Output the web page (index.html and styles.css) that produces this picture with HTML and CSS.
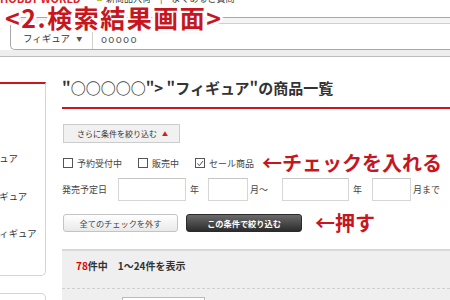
FILE: index.html
```html
<!DOCTYPE html>
<html lang="ja">
<head>
  <meta charset="UTF-8" />
  <title>検索結果画面</title>
  <link rel="stylesheet" href="styles.css">
</head>
<body>
  <div class="topstrip">
    <div class="topstrip-inner">
      <span class="logo">HOBBY WORLD</span>
      <span class="topnav"><i class="dot"></i>新商品入荷　|　よくあるご質問</span>
    </div>
  </div>

  <header>
    <div class="search">
      <div class="search-cat">フィギュア <span class="tri-down">▼</span></div>
      <div class="search-word">ooooo</div>
    </div>
  </header>

  <div class="note-title">&lt;2.検索結果画面&gt;</div>

  <div class="layout">
    <aside>
      <div class="side-box">
        <ul class="side-list">
          <li>ミニアチュア</li>
          <li>可動フィギュア</li>
          <li>美少女フィギュア</li>
        </ul>
      </div>
      <div class="side-box side-box2"></div>
    </aside>

    <main>
      <h2>"○○○○○"&gt; "フィギュア"の商品一覧</h2>

      <div class="more-btn">さらに条件を絞り込む <span class="tri-up">▲</span></div>

      <div class="checks">
        <span class="cb"></span><span class="cb-label">予約受付中</span>
        <span class="cb"></span><span class="cb-label">販売中</span>
        <span class="cb checked">
          <svg width="9" height="9" viewBox="0 0 9 9"><path d="M1.5 4.5 L3.8 6.8 L7.8 1.8" fill="none" stroke="#444" stroke-width="1.1"/></svg>
        </span><span class="cb-label cb-last">セール商品</span>
        <span class="note">←チェックを入れる</span>
      </div>

      <div class="dates">
        <span class="date-label">発売予定日</span>
        <span class="field f-year"></span>
        <span class="unit u1">年</span>
        <span class="field f-month"></span>
        <span class="unit u2">月～</span>
        <span class="field f-year2"></span>
        <span class="unit u3">年</span>
        <span class="field f-month2"></span>
        <span class="unit u4">月まで</span>
      </div>

      <div class="actions">
        <div class="btn btn-light">全てのチェックを外す</div>
        <div class="btn btn-dark">この条件で絞り込む</div>
        <span class="note note-push">←押す</span>
      </div>

      <div class="results">
        <div class="count"><span class="num">78</span>件中　1～24件を表示</div>
        <div class="sort">
          <span class="sort-label">並び替え</span>
          <span class="sort-select"></span>
        </div>
      </div>
    </main>
  </div>
</body>
</html>
```

FILE: styles.css
```css
:root {
  --note-red: #c8161e;
  --line-red: #c9171e;
  --text-color: #333333;
}

* {
  margin: 0;
  padding: 0;
  box-sizing: border-box;
}

body {
  font-family: "Noto Sans CJK JP", "Noto Sans", sans-serif;
  color: var(--text-color);
  background: #ffffff;
  width: 450px;
  height: 300px;
  overflow: hidden;
  position: relative;
}

/* top strip, mostly cut off */
.topstrip {
  height: 5px;
  overflow: hidden;
}

.topstrip-inner {
  margin-top: -7px;
  height: 11px;
  display: flex;
  align-items: center;
  font-size: 9px;
  line-height: 11px;
  white-space: nowrap;
}

.logo {
  color: #d22;
  font-weight: bold;
  font-size: 11px;
  width: 97px;
}

.topnav {
  color: #444;
  display: flex;
  align-items: center;
}

.dot {
  display: inline-block;
  width: 5px;
  height: 5px;
  background: #b6c92b;
  margin-right: 4px;
}

/* header with search */
header {
  padding-top: 12px;
  height: 52px;
  border-bottom: 1px solid #bdbdbd;
  background: linear-gradient(#fff 45px, #eeeeee 45px);
}

.search {
  margin-left: 10px;
  height: 33px;
  display: flex;
  border: 1px solid #a8a8a8;
  border-right: none;
  border-bottom-left-radius: 5px;
  background: #fff;
  box-shadow: inset 0 5px 0 #f4f4f4, inset 0 6px 0 #cfcfcf;
  font-size: 9.5px;
}

.search-cat {
  width: 82px;
  padding-left: 12px;
  border-right: 1px solid #d0d0d0;
  display: flex;
  align-items: center;
  padding-top: 9px;
  color: #333;
}

.tri-down {
  font-size: 6px;
  color: #555;
  margin-left: 6px;
}

.search-word {
  padding-left: 8px;
  padding-top: 9px;
  display: flex;
  align-items: center;
  font-size: 10px;
  letter-spacing: 1.3px;
  color: #555;
}

/* annotation over the header */
.note-title {
  position: absolute;
  left: 5px;
  top: 5px;
  font-size: 25px;
  line-height: 25px;
  letter-spacing: 1.5px;
  font-weight: bold;
  color: var(--note-red);
  white-space: nowrap;
  text-shadow:
    2px 0 0 #fff, -2px 0 0 #fff, 0 2px 0 #fff, 0 -2px 0 #fff,
    2px 2px 0 #fff, -2px 2px 0 #fff, 2px -2px 0 #fff, -2px -2px 0 #fff,
    3px 0 1px #fff, -3px 0 1px #fff, 0 3px 1px #fff, 0 -3px 1px #fff,
    0 0 5px rgba(0, 0, 0, 0.25);
}

.note {
  color: var(--note-red);
  font-weight: bold;
  font-size: 20px;
  line-height: 20px;
  white-space: nowrap;
}

/* layout */
.layout {
  display: flex;
  align-items: flex-start;
}

aside {
  width: 84px;
  margin-left: -38px;
  flex-shrink: 0;
  padding-top: 25px;
}

.side-box {
  border: 1px solid #d4d4d4;
  border-top: 2px solid var(--line-red);
  border-left: none;
  border-radius: 0 0 5px 0;
  height: 194px;
  padding-top: 56px;
}

.side-box2 {
  margin-top: 17px;
  border-top: 1px solid #d4d4d4;
  border-radius: 0 5px 0 0;
  height: 40px;
  padding: 0;
}

.side-list {
  list-style: none;
  font-size: 9.4px;
  color: #333;
}

.side-list li {
  height: 37.5px;
  line-height: 37.5px;
  white-space: nowrap;
}

main {
  flex: 1;
  margin-left: 16px;
  min-width: 0;
}

h2 {
  margin-top: 21px;
  font-size: 15px;
  line-height: 20px;
  font-weight: bold;
  color: #333;
  padding-bottom: 9px;
  border-bottom: 2px solid var(--line-red);
  white-space: nowrap;
}

.more-btn {
  margin-top: 15px;
  margin-left: 1px;
  width: 117px;
  height: 19px;
  background: #f1f1f1;
  border: 1px solid #cccccc;
  font-size: 8px;
  color: #333;
  display: flex;
  align-items: center;
  padding-left: 13px;
}

.tri-up {
  color: #d71920;
  font-size: 6px;
  margin-left: 5px;
}

.checks {
  margin-top: 13px;
  height: 14px;
  display: flex;
  align-items: center;
  font-size: 9px;
  color: #444;
}

.cb {
  width: 10px;
  height: 10px;
  border: 1px solid #555;
  display: inline-flex;
  align-items: center;
  justify-content: center;
  margin-left: 1px;
  margin-right: 4px;
  background: #fff;
}

.cb-label {
  margin-right: 15px;
  white-space: nowrap;
}

.cb-last {
  margin-right: 8px;
}

.dates {
  margin-top: 8px;
  display: flex;
  align-items: center;
  font-size: 9px;
  color: #444;
  white-space: nowrap;
}

.date-label {
  margin-right: 11px;
}

.field {
  height: 23px;
  border: 1px solid #d6d6d6;
  border-top-color: #c6c6c6;
  background: #fff;
}

.f-year { width: 68px; }
.f-month { width: 40px; }
.f-year2 { width: 67px; }
.f-month2 { width: 39px; }

.u1 { margin: 0 9px 0 4px; }
.u2 { margin: 0 14px 0 2px; }
.u3 { margin: 0 10px 0 4px; }
.u4 { margin-left: 2px; }

.actions {
  margin-top: 12px;
  display: flex;
  align-items: center;
}

.btn {
  height: 18px;
  border-radius: 3px;
  font-size: 8.2px;
  display: flex;
  align-items: center;
  justify-content: center;
  white-space: nowrap;
}

.btn-light {
  margin-left: 1px;
  width: 115px;
  border: 1px solid #c4c4c4;
  background: linear-gradient(#ffffff, #e9e9e9);
  color: #444;
}

.btn-dark {
  margin-left: 8px;
  width: 116px;
  background: linear-gradient(#6a6a6a, #2c2c2c);
  border: 1px solid #2a2a2a;
  color: #fff;
  font-weight: bold;
}

.note-push {
  margin-left: 13px;
}

.results {
  margin-top: 16px;
  border-top: 2px solid #d8d8d8;
  background: #efefef;
  height: 60px;
}

.count {
  padding: 8px 0 15px 14px;
  line-height: 14px;
  font-size: 10px;
  font-weight: bold;
  color: #333;
  border-bottom: 1px dashed #cfcfcf;
  white-space: nowrap;
}

.num {
  color: #e00000;
}

.sort {
  display: flex;
  align-items: flex-start;
  padding: 8px 0 0 13px;
  font-size: 9px;
  color: #444;
}

.sort-label {
  width: 47px;
  margin-top: 4px;
}

.sort-select {
  width: 83px;
  height: 16px;
  border: 1px solid #bbbbbb;
  background: #fff;
}
```
